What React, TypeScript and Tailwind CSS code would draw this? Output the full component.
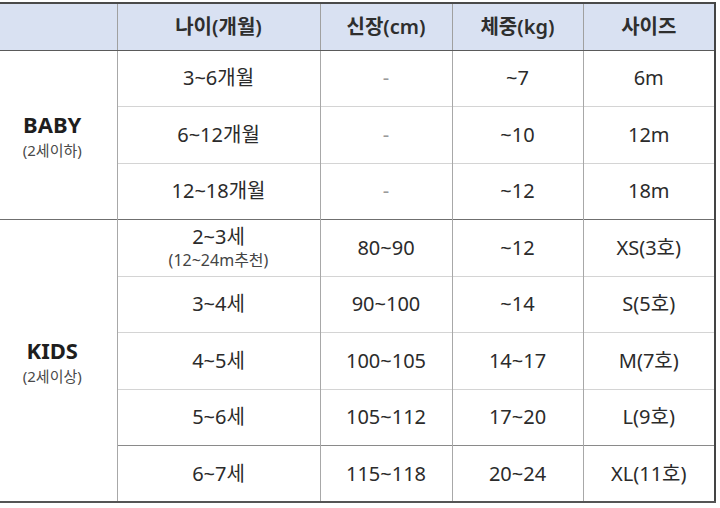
import React from "react";

const font = { fontFamily: '"Noto Sans", "Noto Sans CJK KR", sans-serif' };

type Row = { age: React.ReactNode; h: string; w: string; s: string };

const baby: Row[] = [
  { age: "3~6개월", h: "-", w: "~7", s: "6m" },
  { age: "6~12개월", h: "-", w: "~10", s: "12m" },
  { age: "12~18개월", h: "-", w: "~12", s: "18m" },
];

const kids: Row[] = [
  {
    age: (
      <div className="flex flex-col items-center leading-none">
        <span className="text-[20px] leading-[25px]">2~3세</span>
        <span className="text-[16px] leading-[22px] text-[#444]">(12~24m추천)</span>
      </div>
    ),
    h: "80~90",
    w: "~12",
    s: "XS(3호)",
  },
  { age: "3~4세", h: "90~100", w: "~14", s: "S(5호)" },
  { age: "4~5세", h: "100~105", w: "14~17", s: "M(7호)" },
  { age: "5~6세", h: "105~112", w: "17~20", s: "L(9호)" },
  { age: "6~7세", h: "115~118", w: "20~24", s: "XL(11호)" },
];

const cell = "text-center align-middle text-[20px] text-[#2b2b2b] border-l border-l-[#a8a8a8]";

function Group({
  rows,
  label,
  sub,
  lastDark,
}: {
  rows: Row[];
  label: string;
  sub: string;
  lastDark?: boolean;
}) {
  return (
    <>
      {rows.map((r, i) => {
        const top =
          i === 0
            ? "border-t border-t-[#6f6f6f]"
            : lastDark && i === rows.length - 1
            ? "border-t border-t-[#8a8a8a]"
            : "border-t border-t-[#d4d4d4]";
        return (
          <tr key={i} className="h-[56.5px]">
            {i === 0 && (
              <td rowSpan={rows.length} className="text-center align-middle border-t border-t-[#6f6f6f]">
                <div className="flex flex-col items-center pt-[2px] pr-[12px]">
                  <span className="text-[22px] font-bold text-[#1e1e1e] leading-[28px]">{label}</span>
                  <span className="text-[15px] text-[#4a4a4a] leading-[24px]">{sub}</span>
                </div>
              </td>
            )}
            <td className={`${cell} ${top}`}>{r.age}</td>
            <td className={`${cell} ${top} ${r.h === "-" ? "text-[#9a9a9a]" : ""}`}>{r.h}</td>
            <td className={`${cell} ${top}`}>{r.w}</td>
            <td className={`${cell} ${top}`}>{r.s}</td>
          </tr>
        );
      })}
    </>
  );
}

export default function App() {
  return (
    <div className="w-[720px] h-[508px] bg-white pt-[2px]" style={font}>
      <table className="table-fixed border-collapse w-[715px] border-t-2 border-t-[#4a4a4a] border-r-2 border-r-[#444] border-b-2 border-b-[#555]">
        <colgroup>
          <col className="w-[117px]" />
          <col className="w-[203px]" />
          <col className="w-[132px]" />
          <col className="w-[131px]" />
          <col className="w-[132px]" />
        </colgroup>
        <thead>
          <tr className="h-[47px] bg-[#d9e1f2]">
            <th className="border-b border-b-[#5a5a5a]"></th>
            {["나이(개월)", "신장(cm)", "체중(kg)", "사이즈"].map((t) => (
              <th
                key={t}
                className="text-center align-middle text-[20px] font-semibold text-[#2e2e2e] border-l border-l-[#a0a0a0] border-b border-b-[#5a5a5a]"
              >
                {t}
              </th>
            ))}
          </tr>
        </thead>
        <tbody>
          <Group rows={baby} label="BABY" sub="(2세이하)" />
          <Group rows={kids} label="KIDS" sub="(2세이상)" lastDark />
        </tbody>
      </table>
    </div>
  );
}
